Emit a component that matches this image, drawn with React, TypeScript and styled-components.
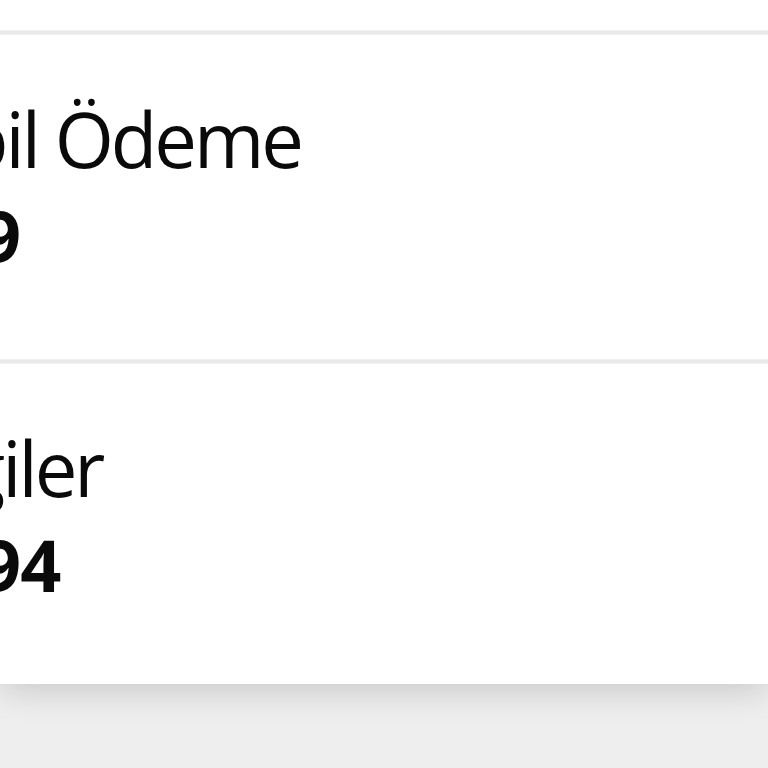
import React from "react";
import styled, { createGlobalStyle } from "styled-components";

const Global = createGlobalStyle`
  html, body { margin: 0; padding: 0; background: #eeeeee; }
  body { font-family: "Open Sans", "Noto Sans", sans-serif; color: #0a0a0a; overflow: hidden; }
  #root { width: 768px; height: 768px; overflow: hidden; }
`;

const Card = styled.div`
  background: #ffffff;
  box-shadow: 0 6px 32px rgba(0, 0, 0, 0.16);
  position: relative;
`;

const TopSpace = styled.div`
  height: 30px;
`;

const Divider = styled.div`
  height: 5px;
  background: linear-gradient(#f5f5f5, #e9e9e9 30%, #e9e9e9 70%, #f5f5f5);
`;

const Row = styled.div<{ $h: number }>`
  height: ${(p) => p.$h}px;
  box-sizing: border-box;
  padding-top: 66px;
  display: flex;
  flex-direction: column;
  gap: 22px;
  margin-left: -146px;
  white-space: nowrap;
`;

const Label = styled.div`
  font-size: 76px;
  line-height: 1;
  font-weight: 400;
  letter-spacing: -3px;
`;

const Value = styled.div`
  font-size: 72px;
  line-height: 1;
  font-weight: 700;
  letter-spacing: -1px;
  margin-left: -14px;
`;

const items = [
  { label: "Mobil Ödeme", value: "20,49", h: 324 },
  { label: "Vergiler", value: "118,94", h: 320 },
];

export default function App() {
  return (
    <>
      <Global />
      <Card>
        <TopSpace />
        {items.map((it) => (
          <React.Fragment key={it.label}>
            <Divider />
            <Row $h={it.h}>
              <Label>{it.label}</Label>
              <Value>{it.value}</Value>
            </Row>
          </React.Fragment>
        ))}
      </Card>
    </>
  );
}
